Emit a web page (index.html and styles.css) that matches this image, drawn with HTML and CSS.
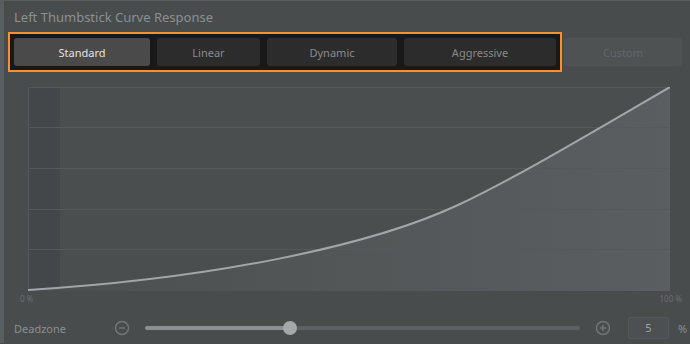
FILE: index.html
```html
<!DOCTYPE html>
<html lang="en">
<head>
<meta charset="UTF-8">
<title>Left Thumbstick Curve Response</title>
<link rel="stylesheet" href="styles.css">
</head>
<body>

<div class="panel">
    <!-- Titre -->
    <h1 class="panel-title">Left Thumbstick Curve Response</h1>

    <!-- Presets -->
    <div class="preset-row">
        <div class="preset-group">
            <button class="preset active" style="width:136px">Standard</button>
            <button class="preset" style="width:103px">Linear</button>
            <button class="preset" style="width:130px">Dynamic</button>
            <button class="preset" style="width:152px">Aggressive</button>
        </div>
        <button class="preset custom">Custom</button>
    </div>

    <!-- Courbe -->
    <div class="chart">
        <svg width="642" height="204" viewBox="0 0 642 204">
            <defs>
                <linearGradient id="fill" x1="0" y1="0" x2="1" y2="0">
                    <stop offset="0" stop-color="#4b4f50"/>
                    <stop offset="1" stop-color="#5a5e60"/>
                </linearGradient>
            </defs>
            <rect x="0" y="0" width="642" height="204" fill="#4a4e4f"/>
            <rect x="0" y="0" width="32" height="204" fill="#434749"/>
            <path d="M0 203 C180 192 340 160 430 118 C490 90 580 36 642 0 L642 204 L0 204 Z" fill="url(#fill)"/>
            <g stroke="#56595b" stroke-width="1">
                <line x1="0" y1="0.5" x2="642" y2="0.5"/>
                <line x1="0" y1="40.5" x2="642" y2="40.5"/>
                <line x1="0" y1="81.5" x2="642" y2="81.5"/>
                <line x1="0" y1="122.5" x2="642" y2="122.5"/>
                <line x1="0" y1="162.5" x2="642" y2="162.5"/>
                <line x1="0.5" y1="0" x2="0.5" y2="204"/>
            </g>
            <path d="M0 203 C180 192 340 160 430 118 C490 90 580 36 642 0" fill="none" stroke="#a2a6a8" stroke-width="2"/>
        </svg>
        <div class="chart-labels">
            <span>0 %</span>
            <span>100 %</span>
        </div>
    </div>

    <!-- Deadzone -->
    <div class="deadzone-row">
        <span class="deadzone-label">Deadzone</span>
        <svg class="round-btn" width="16" height="16" viewBox="0 0 16 16">
            <circle cx="8" cy="8" r="6.5" fill="none" stroke="#6f7476" stroke-width="1.5"/>
            <line x1="5" y1="8" x2="11" y2="8" stroke="#6f7476" stroke-width="1.5"/>
        </svg>
        <div class="slider">
            <div class="slider-fill" style="width:145px"></div>
            <div class="slider-thumb" style="left:145px"></div>
        </div>
        <svg class="round-btn" width="16" height="16" viewBox="0 0 16 16">
            <circle cx="8" cy="8" r="6.5" fill="none" stroke="#6f7476" stroke-width="1.5"/>
            <line x1="5" y1="8" x2="11" y2="8" stroke="#6f7476" stroke-width="1.5"/>
            <line x1="8" y1="5" x2="8" y2="11" stroke="#6f7476" stroke-width="1.5"/>
        </svg>
        <div class="value-box">5</div>
        <span class="unit">%</span>
    </div>
</div>

</body>
</html>
```

FILE: styles.css
```css
body {
    margin: 0;
    padding: 0;
    background-color: #484c4d;
    font-family: "Noto Sans", "Open Sans", sans-serif;
    width: 690px;
    height: 344px;
    overflow: hidden;
}

.panel {
    height: 343px;
    border-top: 1px solid #585d60;
    border-left: 4px solid #585d60;
    box-sizing: border-box;
}

.panel-title {
    margin: 0;
    padding: 7px 0 0 10px;
    height: 24px;
    font-size: 13px;
    font-weight: normal;
    color: #8b9092;
    line-height: 18px;
}

/* Presets */
.preset-row {
    display: flex;
    align-items: center;
    margin-left: 4px;
    height: 40px;
}

.preset-group {
    display: flex;
    gap: 7px;
    padding: 4px;
    border: 2px solid #f3922f;
    background-color: #181818;
}

.preset {
    height: 28px;
    border: none;
    border-radius: 3px;
    background-color: #2c2c2c;
    color: #8a8a8a;
    font-family: "Noto Sans", "Open Sans", sans-serif;
    font-size: 11px;
    padding: 0;
}

.preset.active {
    background-color: #4a4a4a;
    color: #e2e2e2;
}

.preset.custom {
    width: 118px;
    margin-left: 2px;
    background-color: #4e5253;
    color: #62676a;
}

/* Courbe */
.chart {
    margin: 15px 0 0 24px;
    width: 654px;
}

.chart svg {
    display: block;
}

.chart-labels {
    display: flex;
    justify-content: space-between;
    margin-left: -8px;
    font-size: 8px;
    color: #6b7072;
    line-height: 12px;
    margin-top: 2px;
}

/* Deadzone */
.deadzone-row {
    display: flex;
    align-items: center;
    margin-top: 11px;
    padding-left: 10px;
    height: 24px;
}

.deadzone-label {
    width: 100px;
    font-size: 11px;
    color: #8b9092;
}

.round-btn {
    display: block;
}

.slider {
    position: relative;
    width: 435px;
    height: 4px;
    margin: 0 15px 0 15px;
    border-radius: 2px;
    background-color: #5c6062;
}

.slider-fill {
    height: 4px;
    border-radius: 2px;
    background-color: #8b8f91;
}

.slider-thumb {
    position: absolute;
    top: -5px;
    width: 14px;
    height: 14px;
    margin-left: -7px;
    border-radius: 50%;
    background-color: #a4a8aa;
}

.value-box {
    width: 39px;
    height: 20px;
    margin-left: 17px;
    border: 1px solid #53575a;
    border-radius: 2px;
    background-color: #4c5052;
    color: #a0a4a6;
    font-size: 11px;
    text-align: center;
    line-height: 20px;
}

.unit {
    margin-left: 9px;
    font-size: 11px;
    color: #8b9092;
}
```
